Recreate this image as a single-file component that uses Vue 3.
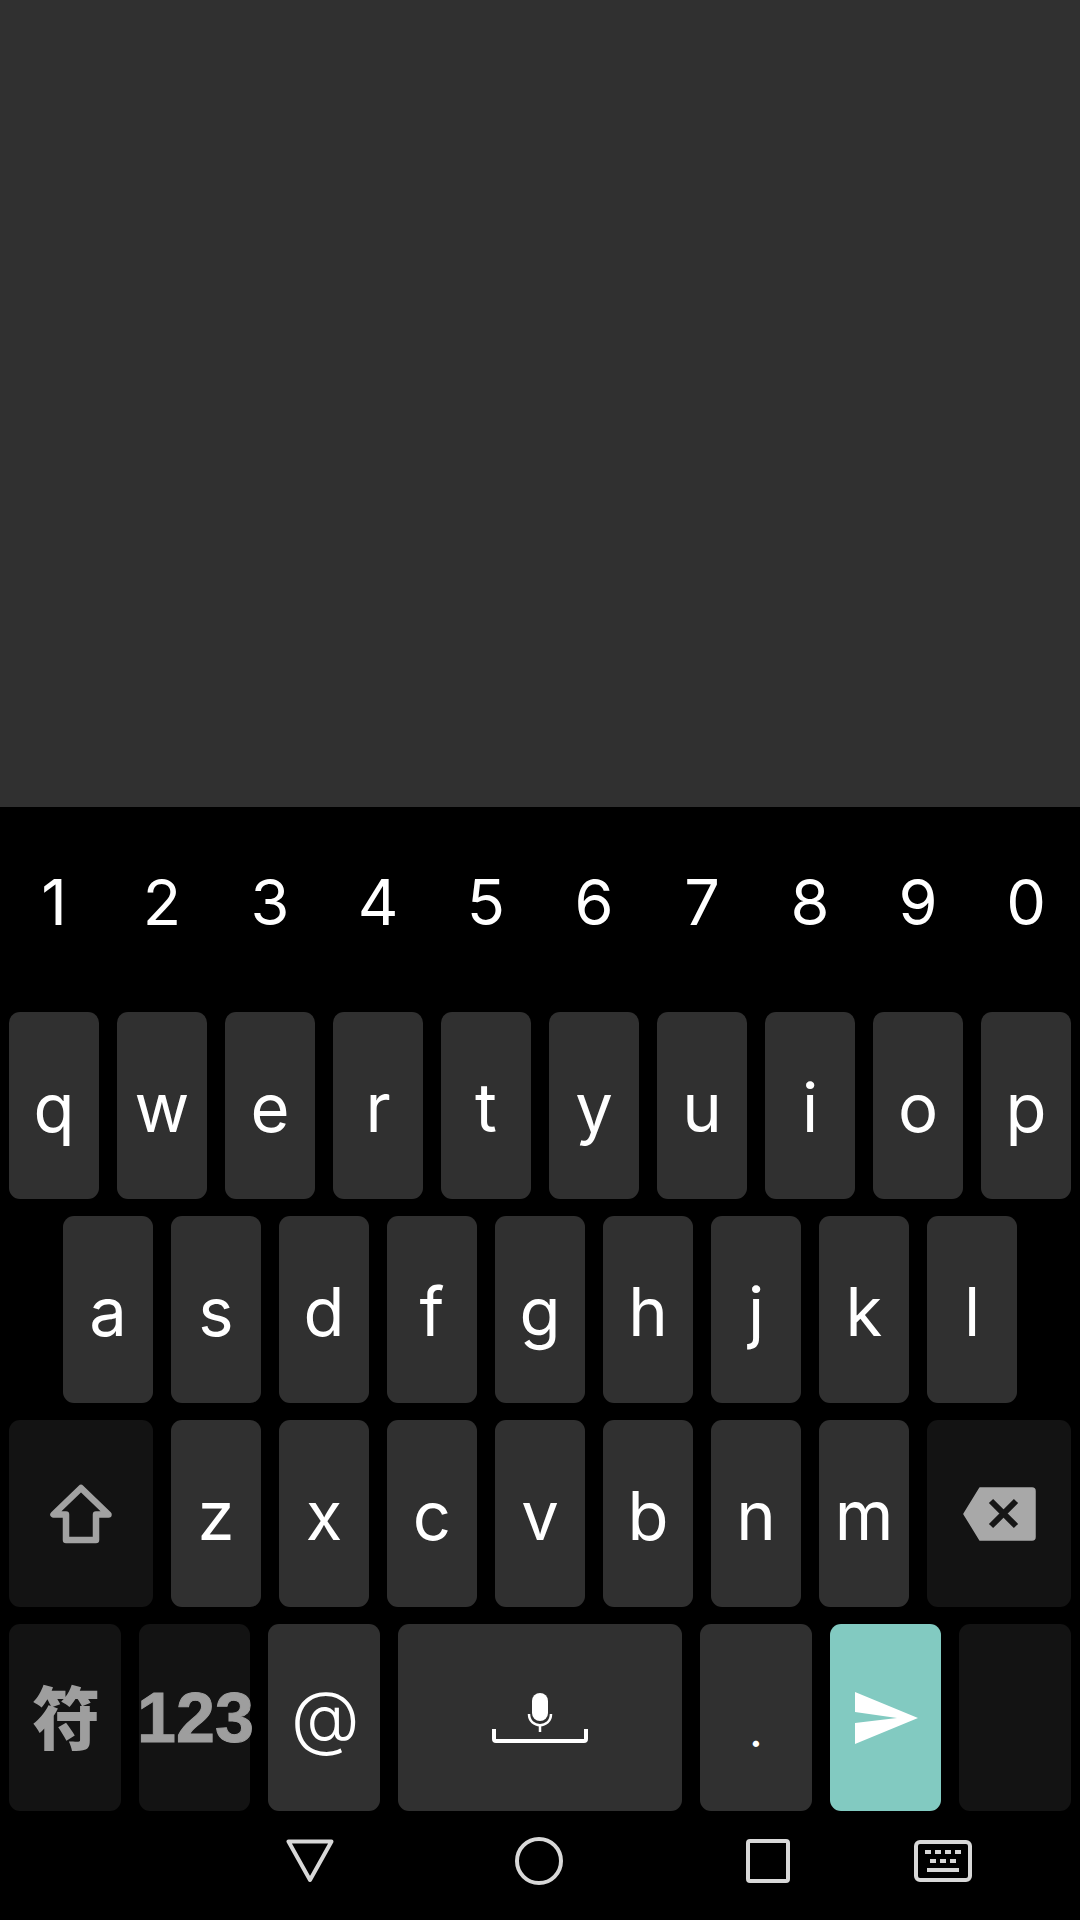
<script setup>
const digits = ['1', '2', '3', '4', '5', '6', '7', '8', '9', '0']
const topRow = ['q', 'w', 'e', 'r', 't', 'y', 'u', 'i', 'o', 'p']
const midRow = ['a', 's', 'd', 'f', 'g', 'h', 'j', 'k', 'l']
const lowRow = ['z', 'x', 'c', 'v', 'b', 'n', 'm']
</script>

<template>
  <div class="screen">
    <div class="panel"></div>
    <div class="keyboard">
      <div class="numbers">
        <span v-for="d in digits" :key="d" class="num">{{ d }}</span>
      </div>

      <div class="rows">
        <div class="row">
          <div v-for="k in topRow" :key="k" class="key letter">{{ k }}</div>
        </div>

        <div class="row row-mid">
          <div v-for="k in midRow" :key="k" class="key letter">{{ k }}</div>
        </div>

        <div class="row">
          <div class="key wide dark icon">
            <svg class="shift" width="72" height="66" viewBox="0 0 72 66" fill="none">
              <path d="M36 5 L8.500 31.500 H21 V57 H51 V31.500 H63.500 Z" stroke="#a2a2a2" stroke-width="6.500" stroke-linejoin="round" />
            </svg>
          </div>
          <div v-for="k in lowRow" :key="k" class="key letter">{{ k }}</div>
          <div class="key wide dark icon">
            <svg width="74" height="56" viewBox="0 0 74 56">
              <path d="M18 2 H70 Q73 2 73 5 V51 Q73 54 70 54 H18 L2 28 Z" fill="#a8a8a8" stroke="#a8a8a8" stroke-width="1.500" stroke-linejoin="round" />
              <path d="M29 15 L54 40 M54 15 L29 40" stroke="#161616" stroke-width="6" fill="none" />
            </svg>
          </div>
        </div>

        <div class="row">
          <div class="key small dark cn">符</div>
          <div class="key small dark digits">123</div>
          <div class="key small at">@</div>
          <div class="key space icon">
            <svg width="98" height="52" viewBox="0 0 98 52" fill="none">
              <rect x="41" y="1" width="16" height="28" rx="8" fill="#fff" />
              <path d="M38 22 C38 37 60 37 60 22" stroke="#fff" stroke-width="2.500" />
              <path d="M49 32 V40" stroke="#fff" stroke-width="2.500" />
              <path d="M3 37 V47 Q3 49 5 49 H93 Q95 49 95 47 V37" stroke="#fff" stroke-width="4" />
            </svg>
          </div>
          <div class="key small dot">.</div>
          <div class="key small send icon">
            <svg width="64" height="54" viewBox="0 0 64 54">
              <path d="M0 1 L63 27 L0 53 V32 L42 27 L0 21 Z" fill="#fff" />
            </svg>
          </div>
          <div class="key small dark"></div>
        </div>
      </div>

      <div class="nav">
        <svg class="nav-back" width="48" height="44" viewBox="0 0 48 44" fill="none">
          <path d="M2.500 2.500 H45.500 L24 41 Z" stroke="#d8d8d8" stroke-width="4" stroke-linejoin="round" />
        </svg>
        <svg class="nav-home" width="48" height="48" viewBox="0 0 48 48" fill="none">
          <circle cx="24" cy="24" r="22" stroke="#d8d8d8" stroke-width="4" />
        </svg>
        <svg class="nav-recent" width="44" height="44" viewBox="0 0 44 44" fill="none">
          <rect x="2" y="2" width="40" height="40" rx="2" stroke="#d8d8d8" stroke-width="4" />
        </svg>
        <svg class="nav-keys" width="58" height="42" viewBox="0 0 58 42" fill="none">
          <rect x="2" y="2" width="54" height="38" rx="4" stroke="#d8d8d8" stroke-width="4" />
          <g fill="#d8d8d8">
            <rect x="11" y="10" width="6" height="4" />
            <rect x="21" y="10" width="6" height="4" />
            <rect x="31" y="10" width="6" height="4" />
            <rect x="41" y="10" width="6" height="4" />
            <rect x="16" y="19" width="6" height="4" />
            <rect x="26" y="19" width="6" height="4" />
            <rect x="36" y="19" width="6" height="4" />
            <rect x="13" y="28" width="32" height="4" />
          </g>
        </svg>
      </div>
    </div>
  </div>
</template>

<style>
html,
body {
  margin: 0;
  background: #000;
}
</style>

<style scoped>
.screen {
  width: 1080px;
  height: 1920px;
  display: flex;
  flex-direction: column;
  background: #000;
  overflow: hidden;
  font-family: Inter, "Noto Sans CJK SC", sans-serif;
  color: #fff;
}

.panel {
  height: 807px;
  background: #303030;
}

.keyboard {
  flex: 1;
  display: flex;
  flex-direction: column;
}

.numbers {
  height: 205px;
  box-sizing: border-box;
  padding: 0 9px;
  display: flex;
  gap: 18px;
}

.num {
  flex: 1;
  text-align: center;
  font-size: 63px;
  font-weight: 400;
  line-height: 80px;
  padding-top: 55px;
}

.rows {
  display: flex;
  flex-direction: column;
  gap: 17px;
  padding: 0 9px;
}

.row {
  display: flex;
  gap: 18px;
  height: 187px;
}

.row-mid {
  padding: 0 54px;
}

.key {
  flex: 1;
  min-width: 0;
  box-sizing: border-box;
  border-radius: 11px;
  background: #303030;
  display: flex;
  justify-content: center;
  white-space: nowrap;
}

.letter {
  font-size: 67px;
  font-weight: 400;
  line-height: 80px;
  padding-top: 56px;
}

.icon {
  align-items: center;
}

.wide {
  flex: 0 0 144px;
}

.small {
  flex: 0 0 111.67px;
}

.dark {
  background: #131313;
}

.cn,
.digits,
.at,
.dot {
  align-items: center;
}

.cn {
  font-size: 68px;
  font-weight: 900;
  color: #9e9e9e;
  padding: 0 0 6px 3px;
}

.digits {
  font-family: "Liberation Sans", sans-serif;
  font-size: 70px;
  font-weight: 700;
  color: #9e9e9e;
  -webkit-text-stroke: 1px #9e9e9e;
  padding-left: 2px;
}

.at {
  font-size: 71px;
  font-weight: 300;
  padding: 0 0 4px 2px;
}

.dot {
  font-size: 48px;
  padding-top: 24px;
}

.space {
  flex: 0 0 284px;
}

.send {
  background: #82cac1;
  padding-left: 4px;
}

.shift {
  margin-top: 4px;
}

.nav {
  flex: 1;
  display: flex;
  align-items: center;
  padding: 0 0 9px 286px;
}

.nav-home {
  margin-left: 181px;
}

.nav-recent {
  margin-left: 183px;
}

.nav-keys {
  margin-left: 124px;
}
</style>
